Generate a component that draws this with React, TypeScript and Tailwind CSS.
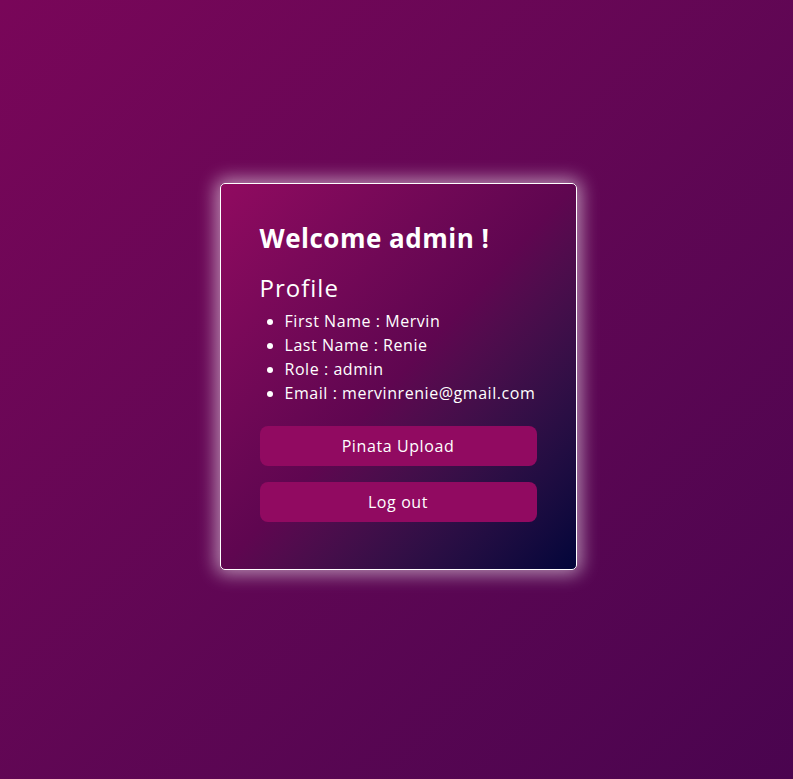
export default function App() {
  const profile = [
    ['First Name', 'Mervin'],
    ['Last Name', 'Renie'],
    ['Role', 'admin'],
    ['Email', 'mervinrenie@gmail.com'],
  ]

  return (
    <div className="flex min-h-screen items-center justify-center bg-gradient-to-br from-[#790659] to-[#4a044f] pb-[27px] pl-[3px] font-['Open_Sans',sans-serif] text-white">
      <div className="w-[357px] rounded-[5px] border border-white bg-gradient-to-br from-[#900a60] via-[#5f0650] to-[#03053a] px-[39px] pb-[47px] pt-[38px] shadow-[0_0_18px_4px_rgba(255,255,255,0.55)]">
        <h1 className="text-[26px] font-bold leading-[32px] tracking-[0.5px]">Welcome admin !</h1>

        <h2 className="mt-[19px] text-[24px] leading-[30px] tracking-[1px]">Profile</h2>
        <ul className="mt-[6px] list-disc pl-[25px] text-[16px] leading-[24px] tracking-[0.55px]">
          {profile.map(([label, value]) => (
            <li key={label} className="whitespace-nowrap">
              {label} : {value}
            </li>
          ))}
        </ul>

        <div className="mt-[21px] flex flex-col gap-[16px]">
          <button className="h-[40px] w-full rounded-[8px] bg-[#910a61] text-[16px] tracking-[0.6px] text-white">
            Pinata Upload
          </button>
          <button className="h-[40px] w-full rounded-[8px] bg-[#910a61] text-[16px] tracking-[0.6px] text-white">
            Log out
          </button>
        </div>
      </div>
    </div>
  )
}
